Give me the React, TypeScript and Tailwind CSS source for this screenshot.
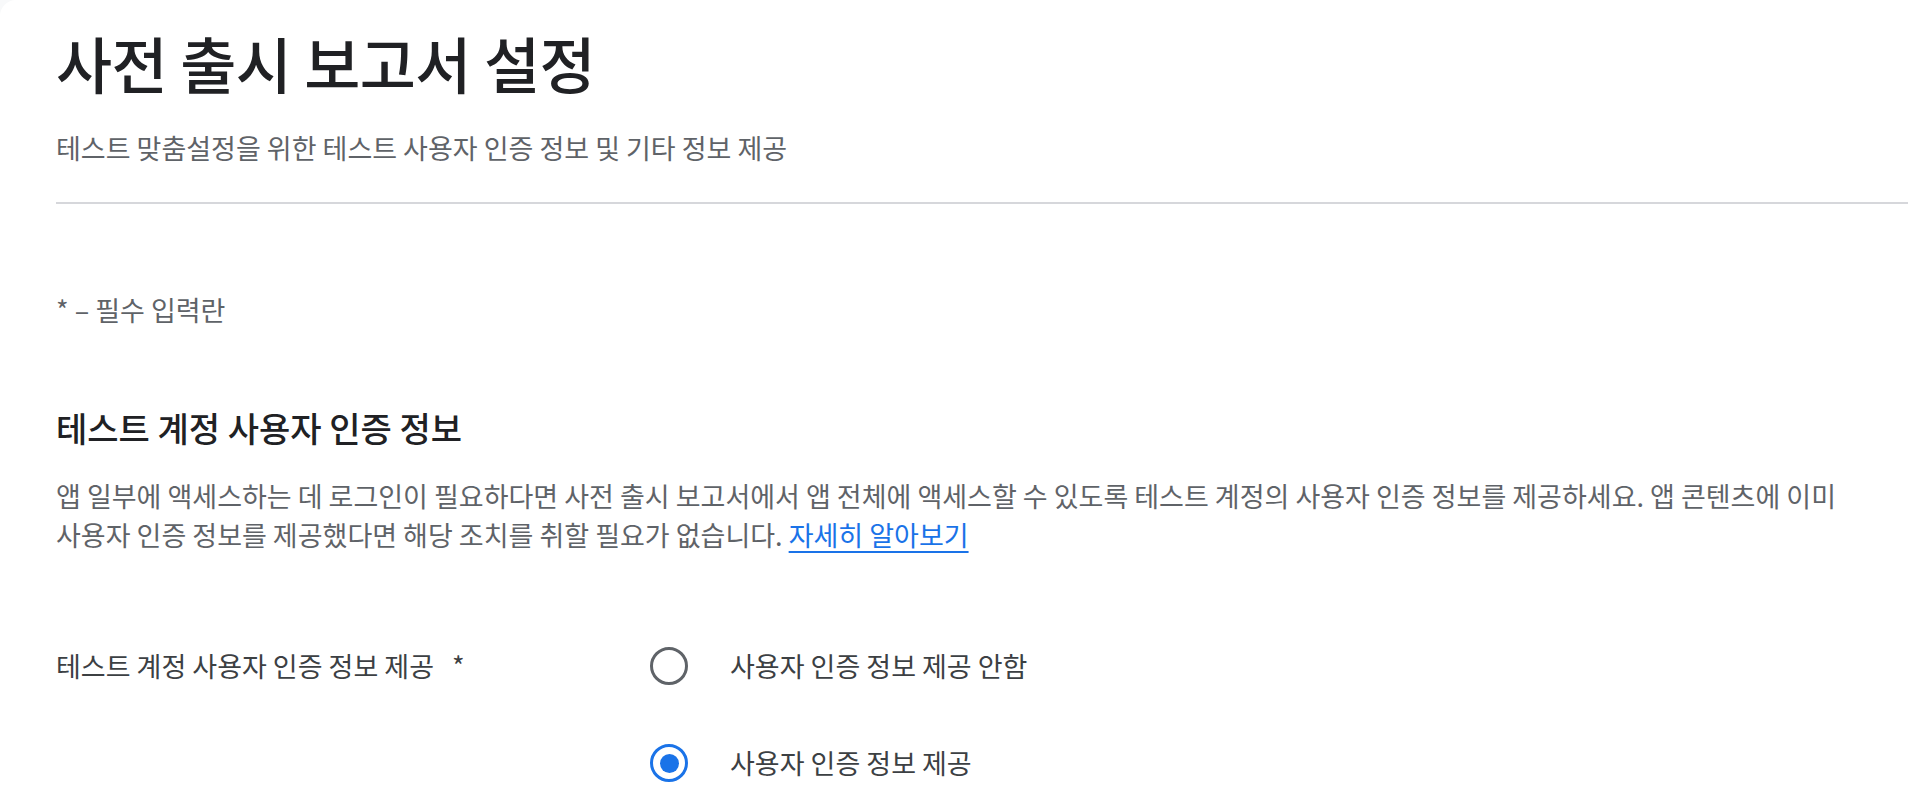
import { useState } from "react";

const font = "font-['Noto_Sans_CJK_KR','Noto_Sans',sans-serif]";

type Choice = "none" | "provide";

function Radio({ checked, label, onSelect }: { checked: boolean; label: string; onSelect: () => void }) {
  return (
    <button onClick={onSelect} className="flex items-center h-[56px] text-left">
      <span
        className={`w-[38px] h-[38px] rounded-full border-[3px] flex items-center justify-center shrink-0 ${
          checked ? "border-[#1a73e8]" : "border-[#5f6368]"
        }`}
      >
        {checked && <span className="w-[19px] h-[19px] rounded-full bg-[#1a73e8]" />}
      </span>
      <span className="ml-[42px] text-[27px] leading-[32px] text-[#3c4043]">{label}</span>
    </button>
  );
}

export default function App() {
  const [choice, setChoice] = useState<Choice>("provide");

  return (
    <div className={`min-h-screen bg-[#f8f9fa] ${font}`}>
      <div className="bg-white rounded-tl-2xl min-h-screen pl-[56px] pt-[31px]">
        <h1 className="text-[61px] leading-[64px] font-medium text-[#202124] tracking-[-0.01em]">
          사전 출시 보고서 설정
        </h1>
        <p className="mt-[37px] text-[27px] leading-[32px] text-[#5f6368]">
          테스트 맞춤설정을 위한 테스트 사용자 인증 정보 및 기타 정보 제공
        </p>
        <div className="mt-[38px] h-[2px] bg-[#d6d7db]" />

        <p className="mt-[90px] text-[27px] leading-[32px] text-[#5f6368]">* – 필수 입력란</p>

        <h2 className="mt-[82px] text-[34px] leading-[40px] font-medium text-[#202124]">
          테스트 계정 사용자 인증 정보
        </h2>
        <p className="mt-[28px] text-[27px] leading-[39px] text-[#5f6368]">
          앱 일부에 액세스하는 데 로그인이 필요하다면 사전 출시 보고서에서 앱 전체에 액세스할 수 있도록 테스트 계정의 사용자 인증 정보를 제공하세요. 앱 콘텐츠에 이미
          <br />
          사용자 인증 정보를 제공했다면 해당 조치를 취할 필요가 없습니다.{" "}
          <a href="#" className="text-[#1a73e8] underline underline-offset-[5px]">
            자세히 알아보기
          </a>
        </p>

        <div className="mt-[84px] flex items-start">
          <div className="w-[594px] h-[56px] flex items-center text-[27px] leading-[32px] text-[#3c4043]">
            테스트 계정 사용자 인증 정보 제공
            <span className="ml-[18px]">*</span>
          </div>
          <div className="flex flex-col gap-[41px]">
            <Radio checked={choice === "none"} label="사용자 인증 정보 제공 안함" onSelect={() => setChoice("none")} />
            <Radio checked={choice === "provide"} label="사용자 인증 정보 제공" onSelect={() => setChoice("provide")} />
          </div>
        </div>
      </div>
    </div>
  );
}
